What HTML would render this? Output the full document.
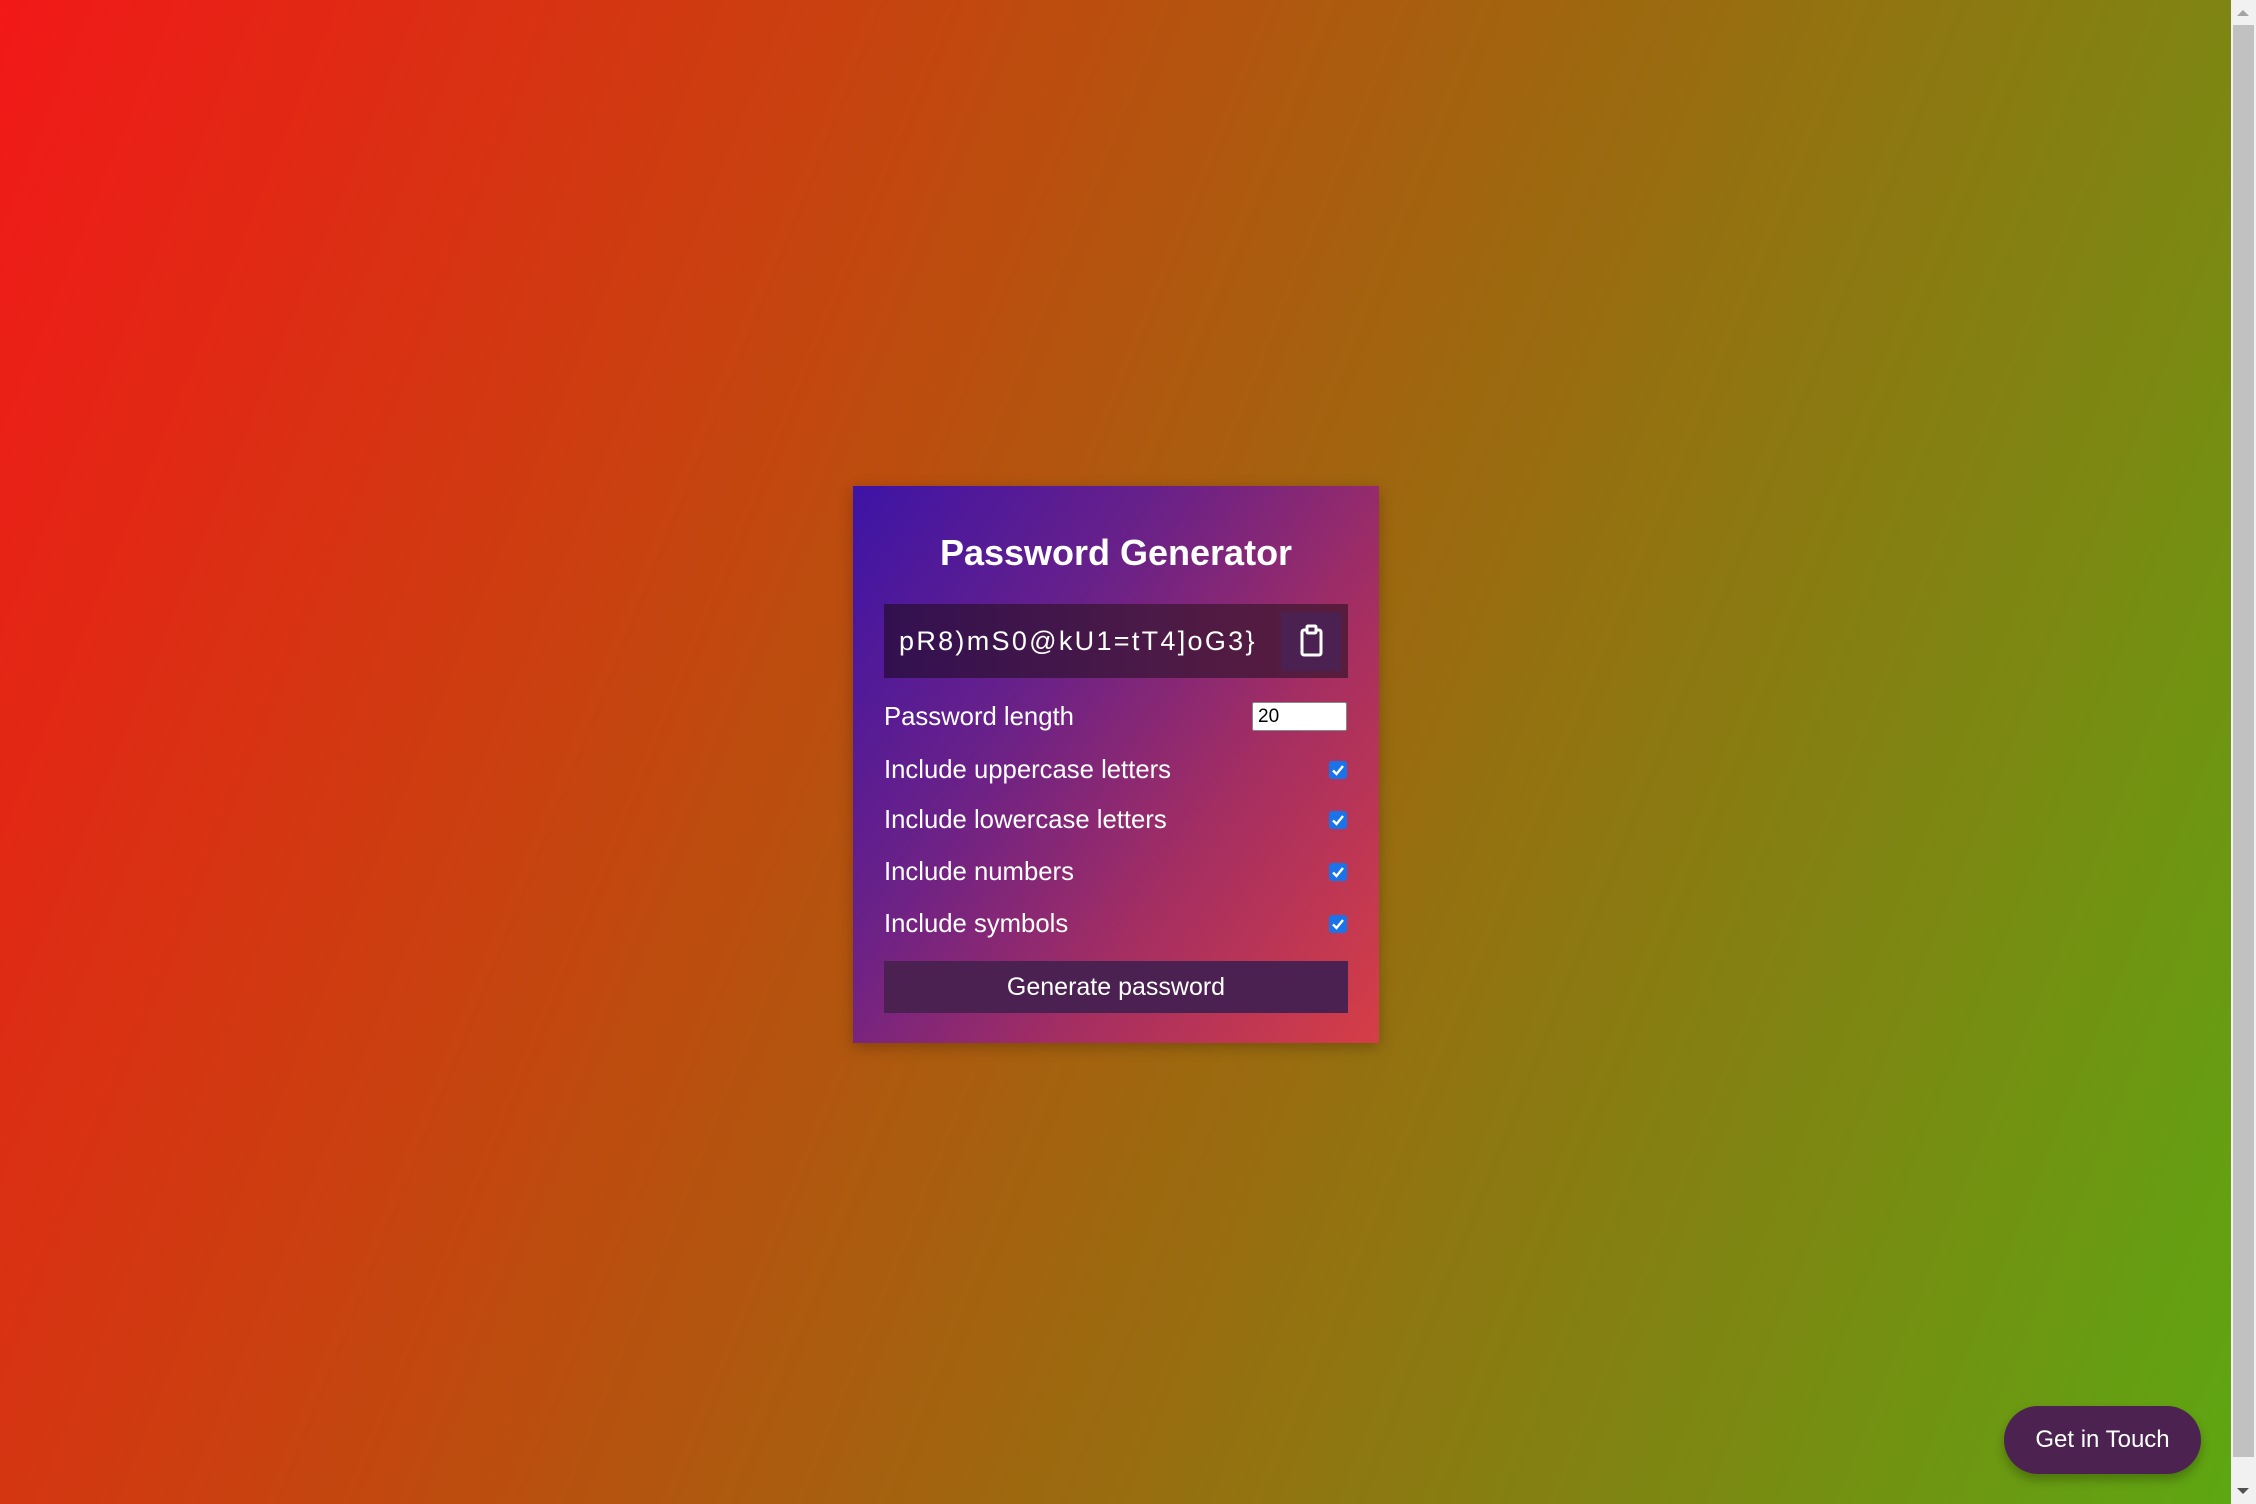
<!DOCTYPE html>
<html><head><style>
html,body{margin:0;padding:0;width:2256px;height:1504px;overflow:hidden}
body{position:relative;background:linear-gradient(112deg,#f21818 0%,#c8420f 30%,#a0660f 55%,#7f8512 78%,#5ca812 100%);font-family:"Liberation Sans",sans-serif}
.sb{position:absolute;left:2231px;top:0;width:25px;height:1504px;background:#f1f1f1}
.thumb{position:absolute;left:2233px;top:25px;width:21px;height:1432px;background:#c1c1c1}
.au{position:absolute;left:2237px;top:10px;width:0;height:0;border-left:6px solid transparent;border-right:6px solid transparent;border-bottom:6px solid #a3a3a3}
.ad{position:absolute;left:2237px;top:1488px;width:0;height:0;border-left:6px solid transparent;border-right:6px solid transparent;border-top:6px solid #505050}
.card{position:absolute;left:853px;top:486px;width:526px;height:557px;background:linear-gradient(125deg,#3d14a6 0%,#6a2188 35%,#a42e62 65%,#d63e46 100%);box-shadow:0 4px 14px rgba(0,0,0,.25)}
h1{position:absolute;left:0;width:526px;margin:0;text-align:center;color:#fff;font-size:36px;font-weight:bold;top:45px;line-height:44px}
.pw{position:absolute;left:31px;top:118px;width:464px;height:74px;background:linear-gradient(90deg,#321050,#4c1a46 60%,#5a1c3c)}
.pwt{position:absolute;left:15px;top:21px;color:#fff;font-size:27px;letter-spacing:2.3px;line-height:32px}
.cb{position:absolute;left:397px;top:8px;width:60px;height:59px;background:#4a2150}
.lbl{position:absolute;left:31px;color:#fff;font-size:25.7px;line-height:30px}
.chk{position:absolute;left:476px;width:18px;height:18px;background:#1a73e8;border-radius:3px}
.inp{position:absolute;left:399px;top:216px;width:95px;height:29px;background:#fff;border:1px solid #888;border-radius:2px;box-sizing:border-box;font-size:19px;line-height:27px;padding-left:5px;color:#000}
.btn{position:absolute;left:31px;top:475px;width:464px;height:52px;background:#4a2150;color:#fff;font-size:25px;text-align:center;line-height:52px}
.git{position:absolute;left:2004px;top:1406px;width:197px;height:68px;border-radius:34px;background:#4c2350;color:#fff;font-size:24px;text-align:center;line-height:68px;box-shadow:0 6px 10px rgba(0,0,0,.25)}
</style></head><body>
<div class="card">
<h1>Password Generator</h1>
<div class="pw"><div class="pwt">pR8)mS0@kU1=tT4]oG3}</div>
<div class="cb"><svg width="60" height="59" viewBox="0 0 60 59"><rect x="21" y="18" width="19" height="25" rx="2" fill="none" stroke="#fff" stroke-width="3"/><rect x="26" y="14" width="9" height="7" rx="1" fill="#4a2150" stroke="#fff" stroke-width="3"/></svg></div></div>
<div class="lbl" style="top:216px">Password length</div>
<div class="inp">20</div>
<div class="lbl" style="top:269px">Include uppercase letters</div>
<div class="lbl" style="top:319px">Include lowercase letters</div>
<div class="lbl" style="top:371px">Include numbers</div>
<div class="lbl" style="top:423px">Include symbols</div>
<div class="chk" style="top:275px"><svg width="18" height="18"><path d="M4 9.5l3.5 3.5 6.5-8" stroke="#fff" stroke-width="2.4" fill="none"/></svg></div>
<div class="chk" style="top:325px"><svg width="18" height="18"><path d="M4 9.5l3.5 3.5 6.5-8" stroke="#fff" stroke-width="2.4" fill="none"/></svg></div>
<div class="chk" style="top:377px"><svg width="18" height="18"><path d="M4 9.5l3.5 3.5 6.5-8" stroke="#fff" stroke-width="2.4" fill="none"/></svg></div>
<div class="chk" style="top:429px"><svg width="18" height="18"><path d="M4 9.5l3.5 3.5 6.5-8" stroke="#fff" stroke-width="2.4" fill="none"/></svg></div>
<div class="btn">Generate password</div>
</div>
<div class="git">Get in Touch</div>
<div class="sb"></div><div class="thumb"></div><div class="au"></div><div class="ad"></div>
</body></html>
